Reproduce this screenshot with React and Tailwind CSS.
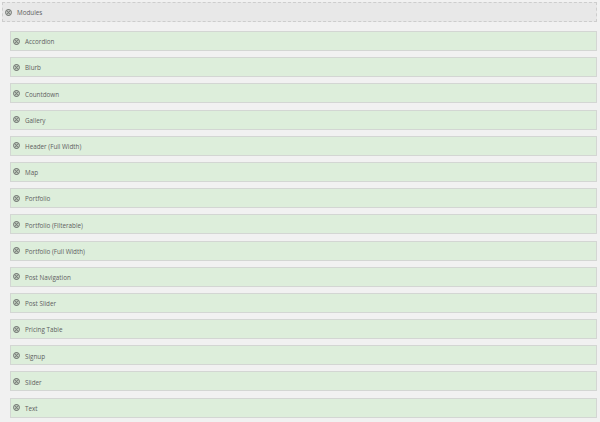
const modules = [
  'Accordion',
  'Blurb',
  'Countdown',
  'Gallery',
  'Header (Full Width)',
  'Map',
  'Portfolio',
  'Portfolio (Filterable)',
  'Portfolio (Full Width)',
  'Post Navigation',
  'Post Slider',
  'Pricing Table',
  'Signup',
  'Slider',
  'Text',
];

const RemoveIcon = () => (
  <svg width="7" height="7" viewBox="0 0 14 14" fill="none" stroke="#787d78" strokeWidth="2.2" className="shrink-0">
    <circle cx="7" cy="7" r="5.7" />
    <path d="M4.4 4.4l5.2 5.2M9.6 4.4l-5.2 5.2" />
  </svg>
);

const Row = ({ label, className }) => (
  <div className={`flex h-[20px] items-center gap-[5px] border pl-[2px] text-[6.3px] text-[#606060] ${className}`}>
    <RemoveIcon />
    <span className="relative top-[1px]">{label}</span>
  </div>
);

export default function App() {
  return (
    <div className="h-[422px] w-[600px] overflow-hidden bg-[#f1f1f1] pl-[2px] pr-[3px] pt-[2px] font-['Open_Sans',sans-serif]">
      <Row label="Modules" className="mb-[9px] border-dashed border-[#cdcdcd] bg-[#e8e8e8]" />
      <div className="ml-[8px] flex flex-col gap-[6.2px]">
        {modules.map(name => (
          <Row key={name} label={name} className="border-[#d3d6d3] bg-[#ddeedb]" />
        ))}
      </div>
    </div>
  );
}
